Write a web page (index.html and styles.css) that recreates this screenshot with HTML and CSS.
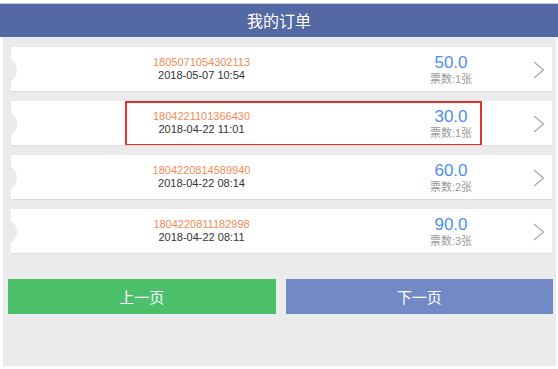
FILE: index.html
```html
<!DOCTYPE html>
<html lang="zh-CN">

<head>
    <meta charset="UTF-8">
    <meta name="viewport" content="width=device-width, initial-scale=1.0" />
    <title>我的订单</title>
    <link rel="stylesheet" href="styles.css">
</head>

<body>
    <header class="top-bar">我的订单</header>

    <div class="panel">
        <ul class="orders">
            <li class="order">
                <div class="order-info">
                    <span class="order-no">1805071054302113</span>
                    <span class="order-time">2018-05-07 10:54</span>
                </div>
                <div class="order-price">
                    <span class="price">50.0</span>
                    <span class="count">票数:1张</span>
                </div>
                <div class="order-arrow">
                    <svg width="12" height="18" viewBox="0 0 12 18"><polyline points="1,1 10.5,9 1,17" fill="none" stroke="#a8a8a8" stroke-width="1.2"/></svg>
                </div>
            </li>
            <li class="order">
                <div class="order-info">
                    <span class="order-no">1804221101366430</span>
                    <span class="order-time">2018-04-22 11:01</span>
                </div>
                <div class="order-price">
                    <span class="price">30.0</span>
                    <span class="count">票数:1张</span>
                </div>
                <div class="order-arrow">
                    <svg width="12" height="18" viewBox="0 0 12 18"><polyline points="1,1 10.5,9 1,17" fill="none" stroke="#a8a8a8" stroke-width="1.2"/></svg>
                </div>
                <div class="highlight"></div>
            </li>
            <li class="order">
                <div class="order-info">
                    <span class="order-no">1804220814589940</span>
                    <span class="order-time">2018-04-22 08:14</span>
                </div>
                <div class="order-price">
                    <span class="price">60.0</span>
                    <span class="count">票数:2张</span>
                </div>
                <div class="order-arrow">
                    <svg width="12" height="18" viewBox="0 0 12 18"><polyline points="1,1 10.5,9 1,17" fill="none" stroke="#a8a8a8" stroke-width="1.2"/></svg>
                </div>
            </li>
            <li class="order">
                <div class="order-info">
                    <span class="order-no">1804220811182998</span>
                    <span class="order-time">2018-04-22 08:11</span>
                </div>
                <div class="order-price">
                    <span class="price">90.0</span>
                    <span class="count">票数:3张</span>
                </div>
                <div class="order-arrow">
                    <svg width="12" height="18" viewBox="0 0 12 18"><polyline points="1,1 10.5,9 1,17" fill="none" stroke="#a8a8a8" stroke-width="1.2"/></svg>
                </div>
            </li>
        </ul>

        <section class="pager">
            <button class="btn btn-prev">上一页</button>
            <button class="btn btn-next">下一页</button>
        </section>
    </div>
</body>

</html>
```

FILE: styles.css
```css
* {
    margin: 0;
    padding: 0;
    box-sizing: border-box;
}

html {
    background-color: #fff;
    font-family: "Liberation Sans", "Noto Sans CJK SC", sans-serif;
}

body {
    padding-top: 3px;
}

.top-bar {
    height: 34px;
    border-top: 1px solid #c9d0e4;
    background-color: #5468a3;
    color: #fff;
    font-family: "Noto Sans CJK SC", sans-serif;
    font-size: 16px;
    line-height: 33px;
    text-align: center;
}

.panel {
    margin: 0 2px 0 3px;
    height: 329px;
    padding: 10px 0 0 0;
    background-color: #ebebeb;
}

.orders {
    list-style: none;
    margin: 0 4px 0 8px;
}

.order {
    position: relative;
    display: grid;
    grid-template-columns: 1fr 118px 42px;
    align-items: center;
    height: 44px;
    margin-bottom: 10px;
    background-color: #fff;
    box-shadow: 0 1px 0 #dcdcdc;
    overflow: hidden;
}

.order:last-child {
    margin-bottom: 0;
}

.order::before {
    content: "";
    position: absolute;
    left: -20px;
    top: 10px;
    width: 26px;
    height: 26px;
    border-radius: 50%;
    background-color: #ebebeb;
}

.order-info,
.order-price {
    display: flex;
    flex-direction: column;
    align-items: center;
}

.order-no {
    color: #f28b55;
    font-size: 11px;
    line-height: 13px;
}

.order-time {
    color: #333;
    font-size: 11px;
    line-height: 13px;
}

.price {
    color: #4f8ef0;
    font-size: 17px;
    line-height: 20px;
}

.count {
    color: #9a9a9a;
    font-size: 11px;
    line-height: 13px;
}

.order-arrow {
    display: flex;
    padding-left: 23px;
    padding-top: 1px;
}

.highlight {
    position: absolute;
    left: 114px;
    top: 0;
    width: 357px;
    height: 45px;
    border: 2px solid #e8312f;
}

.pager {
    display: flex;
    gap: 10px;
    margin: 26px 3px 0 5px;
}

.btn {
    flex: 1;
    height: 35px;
    border: none;
    color: #fff;
    font-family: "Noto Sans CJK SC", sans-serif;
    font-size: 15px;
}

.btn-prev {
    background-color: #4cbf6a;
}

.btn-next {
    background-color: #7289c7;
}
```
